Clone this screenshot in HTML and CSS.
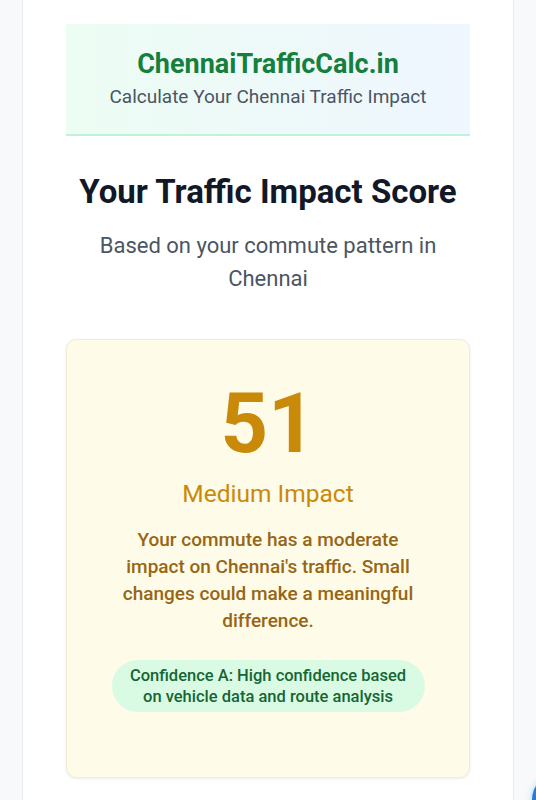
FILE: index.html
```html
<!DOCTYPE html>
<html lang="en">
<head>
<meta charset="utf-8">
<title>ChennaiTrafficCalc.in</title>
<link rel="stylesheet" href="styles.css">
</head>
<body>
<div class="page">
  <header class="brand">
    <h1 class="brand-title">ChennaiTrafficCalc.in</h1>
    <p class="brand-sub">Calculate Your Chennai Traffic Impact</p>
  </header>

  <section class="intro">
    <h2 class="intro-title">Your Traffic Impact Score</h2>
    <p class="intro-sub">Based on your commute pattern in Chennai</p>
  </section>

  <section class="score-card">
    <div class="score">51</div>
    <div class="level">Medium Impact</div>
    <p class="desc">Your commute has a moderate impact on Chennai's traffic. Small changes could make a meaningful difference.</p>
    <div class="badge">Confidence A: High confidence based on vehicle data and route analysis</div>
  </section>
</div>
<div class="fab"></div>
</body>
</html>
```

FILE: styles.css
```css
* { box-sizing: border-box; }

html, body {
  margin: 0;
  padding: 0;
}

body {
  background: #f8f9fb;
  font-family: Roboto, "Noto Sans", "Liberation Sans", sans-serif;
  overflow: hidden;
  height: 800px;
}

.page {
  margin-left: 22px;
  width: 492px;
  min-height: 800px;
  background: #ffffff;
  border-left: 1px solid #e8ebef;
  border-right: 1px solid #e8ebef;
  padding: 24px 43px 0;
  display: flex;
  flex-direction: column;
}

.brand {
  background: linear-gradient(90deg, #ecfdf3 0%, #eff6ff 100%);
  border-bottom: 2px solid #bff2d6;
  padding: 22px 12px 22.5px;
  text-align: center;
}

.brand-title {
  margin: 0;
  font-size: 27px;
  line-height: 36px;
  font-weight: 700;
  color: #15803d;
}

.brand-sub {
  margin: 1px 0 0;
  font-size: 19px;
  line-height: 28px;
  color: #4b5563;
}

.intro {
  margin-top: 36px;
  text-align: center;
}

.intro-title {
  margin: 0;
  font-size: 33px;
  line-height: 40px;
  font-weight: 700;
  color: #111827;
}

.intro-sub {
  margin: 17px 0 0;
  font-size: 22px;
  line-height: 33px;
  color: #4b5563;
}

.score-card {
  margin-top: 44px;
  background: #fefbe8;
  border: 1px solid #f0ecd6;
  border-radius: 10px;
  box-shadow: 0 1px 3px rgba(0, 0, 0, 0.07);
  padding: 42px 20px 65px;
  display: flex;
  flex-direction: column;
  align-items: center;
  text-align: center;
}

.score {
  font-size: 83px;
  line-height: 84px;
  font-weight: 700;
  color: #c98a0a;
}

.level {
  margin-top: 12px;
  font-size: 24.5px;
  line-height: 32px;
  color: #c98a0a;
}

.desc {
  margin: 16px 0 0;
  max-width: 310px;
  font-size: 19px;
  line-height: 27px;
  font-weight: 500;
  color: #976614;
}

.badge {
  margin-top: 26px;
  width: 313px;
  padding: 5px 16px;
  border-radius: 26px;
  background: #d9fbe4;
  color: #166534;
  font-size: 16.5px;
  line-height: 21px;
  font-weight: 500;
}

.fab {
  position: fixed;
  left: 532px;
  top: 772px;
  width: 56px;
  height: 56px;
  border-radius: 50%;
  background: #2b7bd6;
  box-shadow: 0 0 6px rgba(56, 189, 248, 0.5);
}
```
